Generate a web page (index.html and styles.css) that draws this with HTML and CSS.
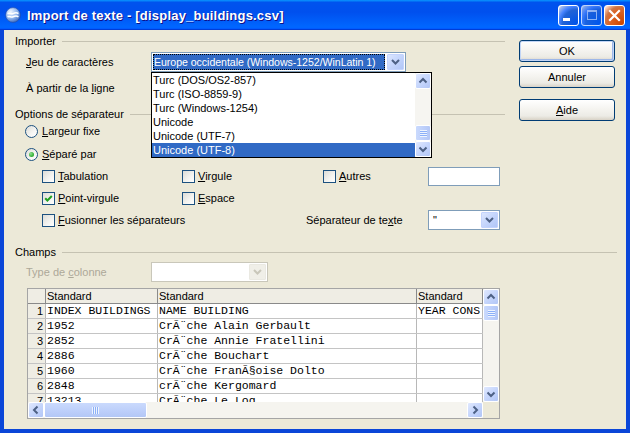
FILE: index.html
```html
<!DOCTYPE html>
<html lang="fr">
<head>
<meta charset="utf-8">
<title>Import de texte</title>
<link rel="stylesheet" href="styles.css">
</head>
<body>
<div class="window">
  <div class="titlebar">
    <svg class="appicon" viewBox="0 0 16 16" width="16" height="16">
      <defs>
        <radialGradient id="ig" cx="35%" cy="30%" r="80%">
          <stop offset="0" stop-color="#F2F8FF"/>
          <stop offset="0.55" stop-color="#8DB3EC"/>
          <stop offset="1" stop-color="#2E5CB5"/>
        </radialGradient>
      </defs>
      <circle cx="8" cy="8" r="7.4" fill="url(#ig)" stroke="#1D48A8" stroke-width="0.6"/>
      <path d="M2.6 6.6c1.8-1.4 3.4 0.9 5.4 0s3.4-1.4 5.4 0M2.6 9.8c1.8-1.4 3.4 0.9 5.4 0s3.4-1.4 5.4 0" stroke="#fff" stroke-width="1.5" fill="none"/>
    </svg>
    <span class="title">Import de texte - [display_buildings.csv]</span>
    <div class="tb-buttons">
      <span class="tb min"><span class="min-bar"></span></span>
      <span class="tb max"><span class="max-box"></span></span>
      <span class="tb close">
        <svg viewBox="0 0 19 19" width="19" height="19"><path d="M5 5l9 9M14 5l-9 9" stroke="#fff" stroke-width="2.2" stroke-linecap="square"/></svg>
      </span>
    </div>
  </div>

  <div class="client">
    <div class="main">
      <div class="group-h"><span>Importer</span></div>

      <div class="row r-charset">
        <span class="lbl"><u>J</u>eu de caractères</span>
        <div class="combo charset">
          <span class="combo-val sel">Europe occidentale (Windows-1252/WinLatin 1)</span>
          <span class="drop-btn"><svg viewBox="0 0 17 16" width="17" height="16"><path d="M5 6l3.5 3.5L12 6" stroke="#4D6185" stroke-width="2" fill="none"/></svg></span>
          <div class="list">
            <div class="list-items">
              <div class="li">Turc (DOS/OS2-857)</div>
              <div class="li">Turc (ISO-8859-9)</div>
              <div class="li">Turc (Windows-1254)</div>
              <div class="li">Unicode</div>
              <div class="li">Unicode (UTF-7)</div>
              <div class="li sel">Unicode (UTF-8)</div>
            </div>
            <div class="list-sb">
              <span class="sb-btn"><svg viewBox="0 0 14 14" width="14" height="14"><path d="M3.5 8.5L7 5l3.5 3.5" stroke="#4D6185" stroke-width="2" fill="none"/></svg></span>
              <span class="sb-space"></span>
              <span class="sb-thumb v"><span class="grip-v"></span></span>
              <span class="sb-btn"><svg viewBox="0 0 14 14" width="14" height="14"><path d="M3.5 5.5L7 9l3.5-3.5" stroke="#4D6185" stroke-width="2" fill="none"/></svg></span>
            </div>
          </div>
        </div>
      </div>

      <div class="row r-start">
        <span class="lbl">À partir de la <u>l</u>igne</span>
        <div class="spin"></div>
      </div>

      <div class="group-h g2"><span>Options de séparateur</span></div>

      <div class="radio-row rr1">
        <span class="radio"></span><span><u>L</u>argeur fixe</span>
      </div>
      <div class="radio-row rr2">
        <span class="radio on"><span class="dot"></span></span><span><u>S</u>éparé par</span>
      </div>

      <div class="checks c1">
        <div class="ck"><span class="box"></span><span><u>T</u>abulation</span></div>
        <div class="ck"><span class="box"></span><span><u>V</u>irgule</span></div>
        <div class="ck"><span class="box"></span><span><u>A</u>utres</span></div>
        <div class="input"></div>
      </div>
      <div class="checks c2">
        <div class="ck"><span class="box on"><svg viewBox="0 0 11 11" width="11" height="11"><path d="M2.2 5.2l2.2 2.3L8.8 3" stroke="#21A121" stroke-width="2" fill="none"/></svg></span><span><u>P</u>oint-virgule</span></div>
        <div class="ck"><span class="box"></span><span><u>E</u>space</span></div>
      </div>
      <div class="checks c3">
        <div class="ck"><span class="box"></span><span><u>F</u>usionner les séparateurs</span></div>
        <span class="txtsep">Séparateur de te<u>x</u>te</span>
        <div class="combo small">
          <span class="combo-val plain">"</span>
          <span class="drop-btn"><svg viewBox="0 0 17 16" width="17" height="16"><path d="M5 6l3.5 3.5L12 6" stroke="#4D6185" stroke-width="2" fill="none"/></svg></span>
        </div>
      </div>

      <div class="group-h g3"><span>Champs</span></div>

      <div class="row r-type">
        <span class="lbl dis">Type de <u>c</u>olonne</span>
        <div class="combo disabled">
          <span class="combo-val plain"></span>
          <span class="drop-btn"><svg viewBox="0 0 17 16" width="17" height="16"><path d="M5 6l3.5 3.5L12 6" stroke="#C9C7BA" stroke-width="2" fill="none"/></svg></span>
        </div>
      </div>

      <div class="grid">
        <div class="viewport">
          <div class="grow head"><div class="c rh"></div><div class="c">Standard</div><div class="c">Standard</div><div class="c">Standard</div></div>
          <div class="grow"><div class="c rh">1</div><div class="c m">INDEX BUILDINGS</div><div class="c m">NAME BUILDING</div><div class="c m">YEAR CONS</div></div>
          <div class="grow"><div class="c rh">2</div><div class="c m">1952</div><div class="c m">CrÃ¨che Alain Gerbault</div><div class="c m"></div></div>
          <div class="grow"><div class="c rh">3</div><div class="c m">2852</div><div class="c m">CrÃ¨che Annie Fratellini</div><div class="c m"></div></div>
          <div class="grow"><div class="c rh">4</div><div class="c m">2886</div><div class="c m">CrÃ¨che Bouchart</div><div class="c m"></div></div>
          <div class="grow"><div class="c rh">5</div><div class="c m">1960</div><div class="c m">CrÃ¨che FranÃ§oise Dolto</div><div class="c m"></div></div>
          <div class="grow"><div class="c rh">6</div><div class="c m">2848</div><div class="c m">crÃ¨che Kergomard</div><div class="c m"></div></div>
          <div class="grow"><div class="c rh">7</div><div class="c m">13213</div><div class="c m">CrÃ¨che Le Log</div><div class="c m"></div></div>
        </div>
        <div class="vscroll">
          <span class="sb-btn"><svg viewBox="0 0 14 14" width="14" height="14"><path d="M3.5 8.5L7 5l3.5 3.5" stroke="#4D6185" stroke-width="2" fill="none"/></svg></span>
          <span class="sb-thumb v"><span class="grip-v"></span></span>
          <span class="sb-space"></span>
          <span class="sb-btn"><svg viewBox="0 0 14 14" width="14" height="14"><path d="M3.5 5.5L7 9l3.5-3.5" stroke="#4D6185" stroke-width="2" fill="none"/></svg></span>
        </div>
        <div class="hscroll">
          <span class="sb-btn"><svg viewBox="0 0 14 14" width="14" height="14"><path d="M8.5 3.5L5 7l3.5 3.5" stroke="#4D6185" stroke-width="2" fill="none"/></svg></span>
          <span class="sb-thumb h"><span class="grip-h"></span></span>
          <span class="sb-space"></span>
          <span class="sb-btn"><svg viewBox="0 0 14 14" width="14" height="14"><path d="M5.5 3.5L9 7l-3.5 3.5" stroke="#4D6185" stroke-width="2" fill="none"/></svg></span>
        </div>
        <div class="corner"></div>
      </div>
    </div>

    <div class="side">
      <div class="btn default">OK</div>
      <div class="btn">Annuler</div>
      <div class="btn help"><u>A</u>ide</div>
    </div>
  </div>
</div>
</body>
</html>
```

FILE: styles.css
```css
* { box-sizing: border-box; }
html, body { margin: 0; padding: 0; }
body {
  width: 630px;
  height: 433px;
  overflow: hidden;
  font-family: "Liberation Sans", Arial, sans-serif;
  font-size: 11px;
  line-height: 13px;
  color: #000;
  background: #ECE9D8;
}
u { text-decoration: underline; text-underline-offset: 1px; }

.window { width: 630px; height: 433px; display: flex; flex-direction: column; }

/* title bar */
.titlebar {
  height: 30px;
  flex: none;
  display: flex;
  align-items: center;
  padding: 0 5px;
  background: linear-gradient(180deg, #0997ff, #0053ee 8%, #0050ee 40%, #06f 88%, #06f 93%, #005bff 95%, #003dd7 96%, #003dd7);
}
.appicon { flex: none; }
.title {
  flex: 1;
  margin-left: 6px;
  color: #fff;
  font-weight: bold;
  font-size: 13px;
  letter-spacing: 0.2px;
  text-shadow: 1px 1px #0f1089;
  white-space: nowrap;
}
.tb-buttons { display: flex; gap: 2px; }
.tb {
  width: 21px;
  height: 21px;
  border: 1px solid #fff;
  border-radius: 3px;
  position: relative;
  display: flex;
  align-items: center;
  justify-content: center;
  background: radial-gradient(circle at 90% 90%, #0054e9 0, #2263d5 55%, #4482ff 70%, #a3bbec 90%, #fff 100%);
}
.tb.max { opacity: 0.75; }
.tb.close { background: radial-gradient(circle at 90% 90%, #cc4600 0, #dc6527 55%, #cd7546 70%, #ffccb2 90%, #fff 100%); }
.min-bar { position: absolute; left: 4px; bottom: 4px; width: 7px; height: 3px; background: #fff; }
.max-box { width: 10px; height: 10px; border: 1px solid rgba(255,255,255,0.7); border-top-width: 2px; }

/* client */
.client {
  flex: 1;
  display: flex;
  border: 4px solid #0A46D8;
  border-top: 0;
  background: #ECE9D8;
}
.main { width: 501px; flex: none; padding-top: 5px; }
.side { width: 96px; margin-left: 14px; padding-top: 10px; display: flex; flex-direction: column; }

.btn {
  height: 22px;
  border: 1px solid #003C74;
  border-radius: 3px;
  background: linear-gradient(180deg, #FFFFFF 0%, #F5F4F0 45%, #ECEBE5 80%, #D8D2C6 100%);
  text-align: center;
  line-height: 20px;
  margin-bottom: 4px;
}
.btn.default { box-shadow: inset 0 0 0 1px #C2D5F5, inset -1px -1px 0 1px #9DB7E8; }
.btn.help { margin-top: 7px; }

/* group headers */
.group-h { display: flex; align-items: center; height: 12px; padding-left: 11px; }
.group-h::after { content: ""; flex: 1; border-top: 1px solid #C5C2B2; margin-left: 6px; }
.g2 { margin-top: 10px; }
.g3 { margin-top: 16px; margin-right: -112px; }

.row { display: flex; align-items: center; height: 20px; padding-left: 22px; }
.r-charset { margin-top: 5px; }
.r-start { margin-top: 6px; }
.r-type { margin-top: 4px; }
.lbl { width: 125px; flex: none; white-space: nowrap; }
.lbl.dis { color: #ACA899; }

/* combo boxes */
.combo {
  height: 20px;
  border: 1px solid #7F9DB9;
  background: #fff;
  padding: 1px;
  display: flex;
  position: relative;
}
.combo.charset { width: 255px; }
.combo.small { width: 72px; }
.combo.disabled { width: 117px; border-color: #C9C7BA; }
.combo-val { flex: 1; line-height: 16px; padding-left: 1px; white-space: nowrap; overflow: hidden; margin-right: 2px; }
.combo-val.sel { background: #316AC5; color: #fff; outline: 1px dotted #000; outline-offset: -1px; padding-left: 1px; font-size: 10.6px; letter-spacing: -0.05px; }
.combo-val.plain { padding-left: 3px; }
.drop-btn {
  width: 17px;
  height: 16px;
  flex: none;
  border: 1px solid #C3D3FD;
  border-radius: 1px;
  background: linear-gradient(135deg, #DCE6FE 0%, #C4D5FC 50%, #B1C6F7 100%);
  display: flex;
  align-items: center;
  justify-content: center;
}
.drop-btn svg { margin: -1px; }
.disabled .drop-btn { background: #F0EFE8; border-color: #EAE9E2; }

.spin { width: 80px; height: 20px; border: 1px solid #7F9DB9; background: #fff; }

/* dropdown list */
.list {
  position: absolute;
  left: -1px;
  top: 19px;
  width: 281px;
  height: 86px;
  border: 1px solid #000;
  background: #fff;
  display: flex;
  z-index: 5;
}
.list-items { flex: 1; }
.li { height: 14px; line-height: 14px; padding-left: 1px; white-space: nowrap; }
.li.sel { background: #316AC5; color: #fff; }
.list-sb { width: 16px; display: flex; flex-direction: column; background: #F6F5F1; }

/* scrollbars */
.sb-btn {
  width: 16px;
  height: 16px;
  flex: none;
  border: 1px solid #fff;
  border-radius: 2px;
  background: linear-gradient(135deg, #E0E8FE 0%, #C6D6FC 50%, #B2C6F6 100%);
  display: flex;
  align-items: center;
  justify-content: center;
}
.sb-space { flex: 1; }
.sb-thumb {
  flex: none;
  border: 1px solid #fff;
  border-radius: 2px;
  background: linear-gradient(90deg, #CADAFD 0%, #BCCEFA 60%, #B3C7F6 100%);
  display: flex;
  align-items: center;
  justify-content: center;
}
.sb-thumb.v { height: 16px; width: 16px; }
.sb-thumb.h { width: 103px; height: 16px; background: linear-gradient(180deg, #CADAFD 0%, #BCCEFA 60%, #B3C7F6 100%); }
.grip-v { width: 7px; height: 7px; background: repeating-linear-gradient(180deg, #EEF4FE 0 1px, #8CB0F8 1px 2px); }
.grip-h { width: 7px; height: 7px; background: repeating-linear-gradient(90deg, #EEF4FE 0 1px, #8CB0F8 1px 2px); }

/* radios / checkboxes */
.radio-row { display: flex; align-items: center; height: 14px; padding-left: 21px; }
.rr1 { margin-top: 4px; }
.rr2 { margin-top: 9px; }
.radio {
  width: 13px;
  height: 13px;
  border: 1px solid #1C5180;
  border-radius: 50%;
  background: linear-gradient(135deg, #DCDCD7 0%, #F6F6F4 60%, #FFFFFF 100%);
  margin-right: 4px;
  display: flex;
  align-items: center;
  justify-content: center;
  flex: none;
}
.dot { width: 5px; height: 5px; border-radius: 50%; background: radial-gradient(circle at 35% 35%, #8EE08F 0%, #36B23A 60%, #21931F 100%); }

.checks {
  display: grid;
  align-items: center;
  height: 20px;
  padding-left: 38px;
  margin-top: 2px;
  grid-template-columns: 140px 141px 105px 72px;
}
.checks.c1 { margin-top: 5px; }
.checks.c3 { grid-template-columns: 264px 122px 72px; }
.ck { display: flex; align-items: center; white-space: nowrap; }
.box {
  width: 13px;
  height: 13px;
  flex: none;
  border: 1px solid #1C5180;
  background: linear-gradient(135deg, #DCDCD7 0%, #F4F4F1 60%, #FFFFFF 100%);
  margin-right: 3px;
  display: flex;
  align-items: center;
  justify-content: center;
}
.input { width: 72px; height: 19px; border: 1px solid #7F9DB9; background: #fff; }
.txtsep { white-space: nowrap; }

/* data grid */
.grid {
  margin-left: 23px;
  margin-top: 6px;
  width: 473px;
  height: 131px;
  border: 1px solid #A5A5A5;
  background: #fff;
  display: grid;
  grid-template-columns: 455px 16px;
  grid-template-rows: 113px 16px;
}
.viewport { overflow: hidden; grid-row: 1; grid-column: 1; }
.grow {
  display: grid;
  grid-template-columns: 18px 112px 259px 66px;
  height: 15px;
  border-bottom: 1px solid #C4C4C4;
}
.grow.head { background: #EFEDE4; border-bottom-color: #8A8A8A; }
.c {
  border-right: 1px solid #B8B8B8;
  line-height: 14px;
  padding-left: 1px;
  white-space: nowrap;
  overflow: hidden;
}
.head .c { border-right-color: #8A8A8A; }
.rh { background: #EFEDE4; text-align: right; padding-right: 2px; }
.m { font-family: "Liberation Mono", "Courier New", monospace; font-size: 11.5px; }

.vscroll { grid-row: 1; grid-column: 2; display: flex; flex-direction: column; background: #F5F4EF; }
.hscroll { grid-row: 2; grid-column: 1; display: flex; background: #F5F4EF; }
.corner { grid-row: 2; grid-column: 2; background: #ECE9D8; }
```
